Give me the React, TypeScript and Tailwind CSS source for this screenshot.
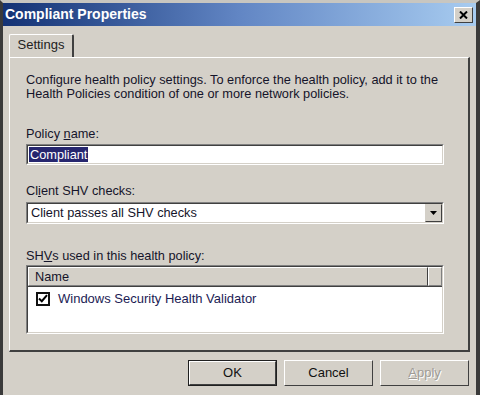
import React from "react";

const ui = { fontFamily: '"Liberation Sans", Arial, sans-serif' };

function Sunken({ className, children }: { className?: string; children?: React.ReactNode }) {
  return (
    <div className={`border border-t-[#808080] border-l-[#808080] border-b-white border-r-white ${className ?? ""}`}>
      <div className="h-full border border-t-[#404040] border-l-[#404040] border-b-[#d4d0c8] border-r-[#d4d0c8] bg-white">
        {children}
      </div>
    </div>
  );
}

function Button({ label, underline, isDefault, disabled }: { label: string; underline?: number; isDefault?: boolean; disabled?: boolean }) {
  const chars = label.split("");
  return (
    <div className={`h-[26px] w-[89px] ${isDefault ? "border border-[#202020]" : ""}`}>
      <div className="flex h-full items-center justify-center border border-t-white border-l-white border-b-[#404040] border-r-[#404040]">
        <span
          className={`text-[13px] ${disabled ? "text-[#a09c96] [text-shadow:1px_1px_0_#ffffff]" : "text-[#111]"}`}
        >
          {chars.map((c, i) => (
            <span key={i} className={i === underline ? "underline" : ""}>
              {c}
            </span>
          ))}
        </span>
      </div>
    </div>
  );
}

export default function App() {
  return (
    <div
      style={ui}
      className="flex h-[395px] w-[480px] flex-col overflow-hidden border-l-[3px] border-r-[4px] border-t-[3px] border-l-[#3a3a3a] border-r-[#3a3a3a] border-t-[#c8c6c0] bg-[#d4d0c8] text-[12.75px] text-[#14142a]"
    >
      {/* title bar */}
      <div className="flex h-[23px] shrink-0 items-center justify-between bg-gradient-to-r from-[#143274] via-[#6286c4] to-[#a8ccf0] pl-[2px] pr-[3px]">
        <span className="text-[14px] font-bold text-white">Compliant Properties</span>
        <div className="flex h-[16px] w-[19px] items-center justify-center border border-t-white border-l-white border-b-[#404040] border-r-[#404040] bg-[#d4d0c8]">
          <svg width="9" height="8" viewBox="0 0 9 8">
            <path d="M1 0.5 L8 7.5 M8 0.5 L1 7.5" stroke="#000" strokeWidth="2" />
          </svg>
        </div>
      </div>

      {/* tabs */}
      <div className="ml-[6px] mt-[8px] flex h-[23px] shrink-0 items-end">
        <div className="flex h-[23px] w-[65px] items-center justify-center rounded-t-[2px] border-l border-t border-r-2 border-l-white border-t-white border-r-[#404040] bg-[#d4d0c8] pb-[2px]">
          <span className="text-[13px] text-[#222]">Settings</span>
        </div>
      </div>

      {/* tab panel */}
      <div className="ml-[6px] mr-[6px] flex h-[295px] shrink-0 flex-col border border-l-white border-t-white border-b-2 border-r-2 border-b-[#404040] border-r-[#404040] pl-[16px] pr-[24px]">
        <p className="mt-[15px] leading-[14px]">
          Configure health policy settings. To enforce the health policy, add it to the
          <br />
          Health Policies condition of one or more network policies.
        </p>

        <div className="mt-[25px] leading-[15px]">
          Policy <span className="underline">n</span>ame:
        </div>
        <Sunken className="mt-[3px] h-[21px]">
          <div className="flex h-full items-center pl-[1px]">
            <span className="bg-[#26266e] px-[1px] leading-[15px] text-white">Compliant</span>
          </div>
        </Sunken>

        <div className="mt-[18px] leading-[15px]">
          Cl<span className="underline">i</span>ent SHV checks:
        </div>
        <Sunken className="mt-[4px] h-[22px]">
          <div className="flex h-full items-center justify-between">
            <span className="pl-[3px]">Client passes all SHV checks</span>
            <div className="flex h-full w-[17px] items-center justify-center border border-t-[#d4d0c8] border-l-[#d4d0c8] border-b-[#404040] border-r-[#404040] bg-[#d4d0c8]">
              <svg width="8" height="5" viewBox="0 0 8 5">
                <path d="M0 0 H7 L3.5 4 Z" fill="#000" />
              </svg>
            </div>
          </div>
        </Sunken>

        <div className="mt-[24px] leading-[15px]">
          SH<span className="underline">V</span>s used in this health policy:
        </div>
        <Sunken className="mt-[2px] h-[69px]">
          <div className="flex h-[20px] border-b border-[#404040] bg-[#d4d0c8]">
            <div className="flex flex-1 items-center border border-t-white border-l-white border-b-[#808080] border-r-[#404040] pl-[6px]">
              Name
            </div>
            <div className="w-[14px] border border-t-white border-l-white border-b-[#808080] border-r-[#808080]" />
          </div>
          <div className="mt-[2px] flex items-center pl-[8px]">
            <div className="flex h-[14px] w-[14px] items-center justify-center border-2 border-[#111] bg-white">
              <svg width="10" height="9" viewBox="0 0 10 9">
                <path d="M1 4.5 L3.8 7.2 L9 1.2" stroke="#000" strokeWidth="2" fill="none" />
              </svg>
            </div>
            <span className="ml-[8px] text-[13px] text-[#1c1c54]">Windows Security Health Validator</span>
          </div>
        </Sunken>
      </div>

      {/* buttons */}
      <div className="mr-[7px] mt-[8px] flex justify-end gap-[7px]">
        <Button label="OK" isDefault />
        <Button label="Cancel" />
        <Button label="Apply" underline={0} disabled />
      </div>
    </div>
  );
}
